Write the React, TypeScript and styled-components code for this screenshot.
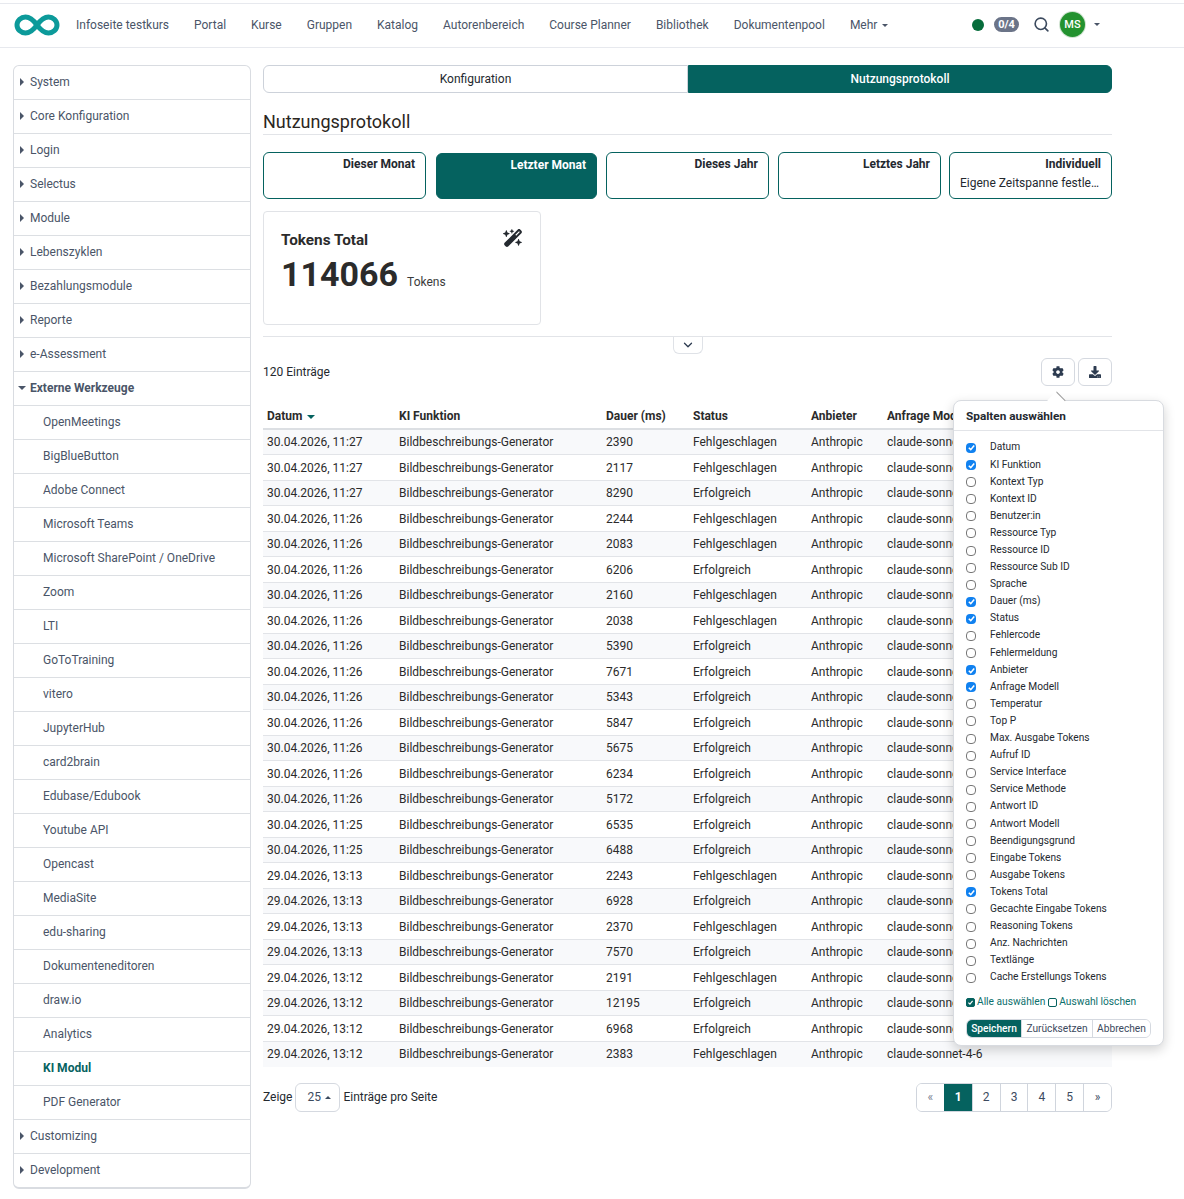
import React from "react";
import styled, { createGlobalStyle } from "styled-components";
import { Search, ChevronDown } from "lucide-react";
import { FaCog, FaDownload } from "react-icons/fa";
import { FaWandMagicSparkles } from "react-icons/fa6";

const TEAL = "#05625f";

const GlobalStyle = createGlobalStyle`
  * { box-sizing: border-box; }
  html, body { margin: 0; padding: 0; background: #fff; }
  body {
    font-family: Roboto, "Liberation Sans", sans-serif;
    font-size: 12px;
    color: #24292f;
  }
`;

const navLinks = ["Infoseite testkurs", "Portal", "Kurse", "Gruppen", "Katalog", "Autorenbereich", "Course Planner", "Bibliothek", "Dokumentenpool"];

type SideItem = { label: string; kind: "closed" | "open" | "sub" | "active" };

const subs = ["OpenMeetings", "BigBlueButton", "Adobe Connect", "Microsoft Teams", "Microsoft SharePoint / OneDrive", "Zoom", "LTI", "GoToTraining", "vitero", "JupyterHub", "card2brain", "Edubase/Edubook", "Youtube API", "Opencast", "MediaSite", "edu-sharing", "Dokumenteneditoren", "draw.io", "Analytics"];

const sideItems: SideItem[] = [
  ...["System", "Core Konfiguration", "Login", "Selectus", "Module", "Lebenszyklen", "Bezahlungsmodule", "Reporte", "e-Assessment"].map((label) => ({ label, kind: "closed" as const })),
  { label: "Externe Werkzeuge", kind: "open" },
  ...subs.map((label) => ({ label, kind: "sub" as const })),
  { label: "KI Modul", kind: "active" },
  { label: "PDF Generator", kind: "sub" },
  { label: "Customizing", kind: "closed" },
  { label: "Development", kind: "closed" },
];

const periods = [
  { title: "Dieser Monat", width: 163, gap: 0 },
  { title: "Letzter Monat", width: 161, gap: 10, active: true },
  { title: "Dieses Jahr", width: 163, gap: 9 },
  { title: "Letztes Jahr", width: 163, gap: 9 },
  { title: "Individuell", width: 163, gap: 8, sub: "Eigene Zeitspanne festle…" },
];

const F = "Fehlgeschlagen";
const E = "Erfolgreich";
const rows: [string, number, string][] = [
  ["30.04.2026, 11:27", 2390, F], ["30.04.2026, 11:27", 2117, F], ["30.04.2026, 11:27", 8290, E],
  ["30.04.2026, 11:26", 2244, F], ["30.04.2026, 11:26", 2083, F], ["30.04.2026, 11:26", 6206, E],
  ["30.04.2026, 11:26", 2160, F], ["30.04.2026, 11:26", 2038, F], ["30.04.2026, 11:26", 5390, E],
  ["30.04.2026, 11:26", 7671, E], ["30.04.2026, 11:26", 5343, E], ["30.04.2026, 11:26", 5847, E],
  ["30.04.2026, 11:26", 5675, E], ["30.04.2026, 11:26", 6234, E], ["30.04.2026, 11:26", 5172, E],
  ["30.04.2026, 11:25", 6535, E], ["30.04.2026, 11:25", 6488, E], ["29.04.2026, 13:13", 2243, F],
  ["29.04.2026, 13:13", 6928, E], ["29.04.2026, 13:13", 2370, F], ["29.04.2026, 13:13", 7570, E],
  ["29.04.2026, 13:12", 2191, F], ["29.04.2026, 13:12", 12195, E], ["29.04.2026, 13:12", 6968, E],
  ["29.04.2026, 13:12", 2383, F],
];

const columns: [string, boolean][] = [
  ["Datum", true], ["KI Funktion", true], ["Kontext Typ", false], ["Kontext ID", false], ["Benutzer:in", false],
  ["Ressource Typ", false], ["Ressource ID", false], ["Ressource Sub ID", false], ["Sprache", false], ["Dauer (ms)", true],
  ["Status", true], ["Fehlercode", false], ["Fehlermeldung", false], ["Anbieter", true], ["Anfrage Modell", true],
  ["Temperatur", false], ["Top P", false], ["Max. Ausgabe Tokens", false], ["Aufruf ID", false], ["Service Interface", false],
  ["Service Methode", false], ["Antwort ID", false], ["Antwort Modell", false], ["Beendigungsgrund", false], ["Eingabe Tokens", false],
  ["Ausgabe Tokens", false], ["Tokens Total", true], ["Gecachte Eingabe Tokens", false], ["Reasoning Tokens", false], ["Anz. Nachrichten", false],
  ["Textlänge", false], ["Cache Erstellungs Tokens", false],
];

const CheckMark = () => (
  <svg width="9" height="9" viewBox="0 0 10 10" fill="none" stroke="#fff" strokeWidth="1.7">
    <path d="M2 5.2 4.2 7.4 8 2.8" />
  </svg>
);

export default function App() {
  return (
    <>
      <GlobalStyle />
      <Page>
        <TopBar>
          <Logo width="46" height="22" viewBox="0 0 46 22" fill="none" stroke="#0c9a9a" strokeWidth="5">
            <path d="M23 11C19 5.500 15.500 3 11.500 3 7 3 3 6.500 3 11s4 8 8.500 8c4 0 7.500-2.500 11.500-8s7.500-8 11.500-8C39 3 43 6.500 43 11s-4 8-8.500 8c-4 0-7.500-2.500-11.500-8Z" />
          </Logo>
          <NavLinks>
            {navLinks.map((l) => (
              <NavLink key={l}>{l}</NavLink>
            ))}
            <NavLink>
              Mehr <Caret $color="#4a5568" />
            </NavLink>
          </NavLinks>
          <NavTools>
            <StatusDot />
            <Counter>0/4</Counter>
            <SearchButton>
              <Search size={17} strokeWidth={2.3} />
            </SearchButton>
            <Avatar>MS</Avatar>
            <Caret $color="#4a5568" />
          </NavTools>
        </TopBar>

        <Content>
          <Sidebar>
            {sideItems.map((item) => (
              <SideRow key={item.label} $kind={item.kind}>
                {item.kind === "closed" && <CaretRight />}
                {item.kind === "open" && <CaretOpen />}
                {item.label}
              </SideRow>
            ))}
          </Sidebar>

          <Main>
            <Tabs>
              <Tab>Konfiguration</Tab>
              <Tab $active>Nutzungsprotokoll</Tab>
            </Tabs>
            <Heading>Nutzungsprotokoll</Heading>

            <Periods>
              {periods.map((p) => (
                <Period key={p.title} $active={p.active} $width={p.width} $gap={p.gap}>
                  <PeriodTitle>{p.title}</PeriodTitle>
                  {p.sub && <PeriodSub>{p.sub}</PeriodSub>}
                </Period>
              ))}
            </Periods>

            <TokenCard>
              <TokenHead>
                <TokenTitle>Tokens Total</TokenTitle>
                <WandIcon size={20} color="#24292f" />
              </TokenHead>
              <TokenValue>
                <BigNumber>114066</BigNumber>
                <TokenUnit>Tokens</TokenUnit>
              </TokenValue>
            </TokenCard>

            <Collapse>
              <CollapseTab>
                <ChevronDown size={14} strokeWidth={2.2} color="#2d3b50" />
              </CollapseTab>
            </Collapse>

            <ToolRow>
              <span>120 Einträge</span>
              <ToolButtons>
                <ToolButton><FaCog size={12} /></ToolButton>
                <ToolButton><FaDownload size={12} /></ToolButton>
              </ToolButtons>
            </ToolRow>

            <DataTable>
              <colgroup>
                <col style={{ width: 132 }} />
                <col style={{ width: 207 }} />
                <col style={{ width: 87 }} />
                <col style={{ width: 118 }} />
                <col style={{ width: 76 }} />
                <col />
              </colgroup>
              <thead>
                <tr>
                  <Th>Datum <SortCaret /></Th>
                  <Th>KI Funktion</Th>
                  <Th>Dauer (ms)</Th>
                  <Th>Status</Th>
                  <Th>Anbieter</Th>
                  <Th>Anfrage Modell</Th>
                </tr>
              </thead>
              <tbody>
                {rows.map(([date, ms, status], i) => (
                  <Tr key={i}>
                    <Td>{date}</Td>
                    <Td>Bildbeschreibungs-Generator</Td>
                    <Td>{ms}</Td>
                    <Td>{status}</Td>
                    <Td>Anthropic</Td>
                    <Td>claude-sonnet-4-6</Td>
                  </Tr>
                ))}
              </tbody>
            </DataTable>

            <Footer>
              <PageSize>
                Zeige
                <SizeSelect>25 <CaretUp /></SizeSelect>
                Einträge pro Seite
              </PageSize>
              <Pager>
                <PageCell $muted>«</PageCell>
                <PageCell $active>1</PageCell>
                <PageCell>2</PageCell>
                <PageCell>3</PageCell>
                <PageCell>4</PageCell>
                <PageCell>5</PageCell>
                <PageCell>»</PageCell>
              </Pager>
            </Footer>

            <Popover>
              <PopArrow />
              <PopTitle>Spalten auswählen</PopTitle>
              <ColumnList>
                {columns.map(([label, on]) => (
                  <ColumnRow key={label}>
                    <RoundCheck $on={on}>{on && <CheckMark />}</RoundCheck>
                    {label}
                  </ColumnRow>
                ))}
              </ColumnList>
              <SelectLinks>
                <SelectLink><SmallBox $on><CheckMark /></SmallBox>Alle auswählen</SelectLink>
                <SelectLink><SmallBox />Auswahl löschen</SelectLink>
              </SelectLinks>
              <ButtonGroup>
                <GroupButton $primary $width={54}>Speichern</GroupButton>
                <GroupButton $width={71}>Zurücksetzen</GroupButton>
                <GroupButton $width={58}>Abbrechen</GroupButton>
              </ButtonGroup>
            </Popover>
          </Main>
        </Content>
      </Page>
    </>
  );
}

const Page = styled.div`
  width: 1184px;
  border-top: 1px solid transparent;
`;

const TopBar = styled.header`
  height: 45px;
  margin-top: 2px;
  padding: 0 0 2px 14px;
  border-top: 1px solid #e7e9ee;
  border-bottom: 1px solid #e7e9ee;
  display: flex;
  align-items: center;
`;

const Logo = styled.svg`
  flex: none;
  margin-right: 16px;
`;

const NavLinks = styled.nav`
  display: flex;
  gap: 25px;
  flex: 1;
`;

const NavLink = styled.span`
  color: #4a5568;
  white-space: nowrap;
`;

const Caret = styled.span<{ $color: string }>`
  display: inline-block;
  width: 0;
  height: 0;
  margin-left: 2px;
  vertical-align: middle;
  border-left: 3.500px solid transparent;
  border-right: 3.500px solid transparent;
  border-top: 3.500px solid ${(p) => p.$color};
`;

const NavTools = styled.div`
  display: flex;
  align-items: center;
  margin-right: 84px;
`;

const StatusDot = styled.span`
  width: 12px;
  height: 12px;
  border-radius: 50%;
  background: #066c3b;
  margin-right: 10px;
`;

const Counter = styled.span`
  width: 25px;
  height: 15px;
  border-radius: 8px;
  background: #6b7488;
  color: #fff;
  font-weight: 700;
  font-size: 11px;
  line-height: 15px;
  text-align: center;
  margin-right: 14px;
`;

const SearchButton = styled.span`
  display: flex;
  color: #3c4a5e;
  margin-right: 10px;
`;

const Avatar = styled.span`
  width: 25px;
  height: 25px;
  border-radius: 50%;
  background: #23922f;
  box-shadow: 0 0 0 1px #cfe3d0;
  color: #fff;
  font-weight: 500;
  font-size: 11px;
  line-height: 25px;
  text-align: center;
  margin-right: 7px;
`;

const Content = styled.div`
  display: flex;
  align-items: flex-start;
  gap: 12px;
  padding: 17px 0 0 13px;
`;

const Sidebar = styled.aside`
  width: 238px;
  flex: none;
  border: 1px solid #d9dce1;
  border-bottom-width: 2px;
  border-radius: 6px;
  overflow: hidden;
`;

const SideRow = styled.div<{ $kind: string }>`
  height: 34px;
  display: flex;
  align-items: center;
  border-bottom: 1px solid #dcdfe3;
  padding-bottom: 2px;
  padding-left: ${(p) => (p.$kind === "sub" || p.$kind === "active" ? "29px" : p.$kind === "open" ? "4px" : "6px")};
  color: ${(p) => (p.$kind === "active" ? TEAL : "#4a5568")};
  font-weight: ${(p) => (p.$kind === "active" || p.$kind === "open" ? 700 : 400)};
  &:last-child { border-bottom: 0; height: 33px; }
`;

const CaretRight = styled.span`
  width: 0;
  height: 0;
  margin-right: 6px;
  border-top: 4.500px solid transparent;
  border-bottom: 4.500px solid transparent;
  border-left: 4.500px solid #4a5568;
`;

const CaretOpen = styled.span`
  width: 0;
  height: 0;
  margin-right: 4px;
  border-left: 4.500px solid transparent;
  border-right: 4.500px solid transparent;
  border-top: 4.500px solid #4a5568;
`;

const Main = styled.main`
  position: relative;
  width: 849px;
  flex: none;
`;

const Tabs = styled.div`
  display: grid;
  grid-template-columns: 425px 424px;
  height: 28px;
`;

const Tab = styled.div<{ $active?: boolean }>`
  display: flex;
  align-items: center;
  justify-content: center;
  color: ${(p) => (p.$active ? "#fff" : "#24292f")};
  background: ${(p) => (p.$active ? TEAL : "#fff")};
  font-weight: ${(p) => (p.$active ? 500 : 400)};
  border: 1px solid ${(p) => (p.$active ? TEAL : "#cdd2da")};
  border-radius: ${(p) => (p.$active ? "0 6px 6px 0" : "6px 0 0 6px")};
`;

const Heading = styled.h2`
  margin: 17px 0 17px;
  height: 25px;
  font-size: 18px;
  font-weight: 400;
  line-height: 24px;
  color: #2b2622;
  border-bottom: 1px solid #e2e4e8;
`;

const Periods = styled.div`
  display: flex;
`;

const Period = styled.div<{ $active?: boolean; $width: number; $gap: number }>`
  width: ${(p) => p.$width}px;
  height: ${(p) => (p.$active ? "46px" : "47px")};
  margin: ${(p) => (p.$active ? "1px" : "0")} 0 0 ${(p) => p.$gap}px;
  padding: 4px 10px;
  border: 1px solid ${TEAL};
  border-radius: 6px;
  text-align: right;
  background: ${(p) => (p.$active ? TEAL : "#fff")};
  color: ${(p) => (p.$active ? "#fff" : "#24292f")};
`;

const PeriodTitle = styled.div`
  font-weight: 700;
  line-height: 14px;
`;

const PeriodSub = styled.div`
  margin-top: 5px;
  line-height: 14px;
  text-align: left;
  white-space: nowrap;
`;

const TokenCard = styled.section`
  width: 278px;
  height: 114px;
  margin-top: 12px;
  padding: 19px 17px;
  border: 1px solid #e1e3e7;
  border-radius: 4px;
`;

const TokenHead = styled.div`
  display: flex;
  justify-content: space-between;
  align-items: flex-start;
`;

const WandIcon = styled(FaWandMagicSparkles)`
  margin-top: -3px;
`;

const TokenTitle = styled.div`
  font-size: 15.300px;
  font-weight: 700;
  line-height: 19px;
  color: #2b2b2b;
`;

const TokenValue = styled.div`
  display: flex;
  align-items: baseline;
  gap: 9px;
  margin-top: 4px;
`;

const BigNumber = styled.span`
  font-size: 34px;
  line-height: 40px;
  font-weight: 700;
  color: #2b2b2b;
`;

const TokenUnit = styled.span`
  color: #3b3b3b;
`;

const Collapse = styled.div`
  margin-top: 11px;
  border-top: 1px solid #e2e4e8;
  height: 22px;
  display: flex;
  justify-content: center;
  padding-left: 1px;
`;

const CollapseTab = styled.div`
  width: 30px;
  height: 17px;
  display: flex;
  align-items: center;
  justify-content: center;
  border: 1px solid #dfe2e7;
  border-top: 0;
  border-radius: 0 0 6px 6px;
`;

const ToolRow = styled.div`
  height: 28px;
  display: flex;
  align-items: center;
  justify-content: space-between;
`;

const ToolButtons = styled.div`
  display: flex;
  gap: 3px;
`;

const ToolButton = styled.button`
  width: 34px;
  height: 28px;
  display: flex;
  align-items: center;
  justify-content: center;
  padding: 0;
  background: #fff;
  color: #2d3b50;
  border: 1px solid #d5d9e0;
  border-radius: 6px;
`;

const DataTable = styled.table`
  width: 100%;
  margin-top: 15.400px;
  table-layout: fixed;
  border-collapse: collapse;
`;

const Th = styled.th`
  height: 28px;
  padding: 2px 4px 0;
  text-align: left;
  font-weight: 700;
  white-space: nowrap;
  color: #2b2b2b;
  border-bottom: 2px solid #dcdfe3;
`;

const SortCaret = styled.span`
  display: inline-block;
  width: 0;
  height: 0;
  margin-left: 2px;
  vertical-align: middle;
  border-left: 4px solid transparent;
  border-right: 4px solid transparent;
  border-top: 4px solid ${TEAL};
`;

const Tr = styled.tr`
  height: 25.500px;
  border-bottom: 1px solid #e2e4e8;
  &:nth-child(odd) { background: #f8f9fb; }
  &:last-child { border-bottom: 0; }
`;

const Td = styled.td`
  padding: 0 4px;
  white-space: nowrap;
  overflow: hidden;
  color: #2b2b2b;
`;

const Footer = styled.div`
  display: flex;
  justify-content: space-between;
  margin-top: 16px;
`;

const PageSize = styled.div`
  display: flex;
  align-items: center;
  gap: 3px;
  height: 29px;
`;

const SizeSelect = styled.span`
  width: 45px;
  height: 29px;
  display: flex;
  align-items: center;
  gap: 4px;
  padding-left: 11px;
  color: #3c4a5e;
  border: 1px solid #d5d9e0;
  border-radius: 6px;
`;

const CaretUp = styled.span`
  width: 0;
  height: 0;
  border-left: 3px solid transparent;
  border-right: 3px solid transparent;
  border-bottom: 3px solid #3c4a5e;
`;

const Pager = styled.div`
  display: flex;
  width: 196px;
  height: 29px;
  border: 1px solid #d0d5dd;
  border-radius: 6px;
  overflow: hidden;
`;

const PageCell = styled.span<{ $active?: boolean; $muted?: boolean }>`
  flex: 1;
  display: flex;
  align-items: center;
  justify-content: center;
  background: ${(p) => (p.$active ? TEAL : "#fff")};
  color: ${(p) => (p.$active ? "#fff" : p.$muted ? "#7b8494" : "#3c4a5e")};
  font-weight: ${(p) => (p.$active ? 700 : 400)};
  border-left: 1px solid ${(p) => (p.$active ? TEAL : "#d0d5dd")};
  &:first-child { border-left: 0; }
`;

const Popover = styled.div`
  position: absolute;
  left: 690px;
  top: 335px;
  width: 211px;
  height: 646px;
  background: #fff;
  border: 1px solid #d8dbe0;
  border-radius: 8px;
  box-shadow: 0 4px 12px rgba(0, 0, 0, 0.18);
`;

const PopArrow = styled.span`
  position: absolute;
  left: 96px;
  top: -7px;
  width: 13px;
  height: 13px;
  background: #fff;
  border-top: 1px solid #9a9a9a;
  border-left: 1px solid transparent;
  transform: rotate(45deg);
`;

const PopTitle = styled.div`
  height: 30px;
  padding: 8px 12px 0;
  font-size: 11.800px;
  font-weight: 700;
  line-height: 14px;
  color: #24292f;
  border-bottom: 1px solid #e2e4e8;
`;

const ColumnList = styled.div`
  padding-top: 7.400px;
`;

const ColumnRow = styled.div`
  height: 17.100px;
  display: flex;
  align-items: center;
  padding-left: 12px;
  font-size: 10.200px;
  color: #24292f;
`;

const RoundCheck = styled.span<{ $on?: boolean }>`
  width: 10px;
  height: 10px;
  margin: 2px 14px 0 0;
  display: flex;
  align-items: center;
  justify-content: center;
  border-radius: 4px;
  background: ${(p) => (p.$on ? "#1081f0" : "#fff")};
  border: ${(p) => (p.$on ? "0" : "1px solid #777")};
`;

const SelectLinks = styled.div`
  display: flex;
  gap: 3px;
  padding: 11.100px 0 0 12px;
`;

const SelectLink = styled.span`
  display: flex;
  align-items: center;
  gap: 2px;
  color: #0d6f6c;
  font-size: 10.200px;
  line-height: 12px;
`;

const SmallBox = styled.span<{ $on?: boolean }>`
  width: 9px;
  height: 9px;
  display: flex;
  align-items: center;
  justify-content: center;
  border-radius: 2px;
  border: 1px solid ${TEAL};
  background: ${(p) => (p.$on ? TEAL : "#fff")};
`;

const ButtonGroup = styled.div`
  display: flex;
  height: 19px;
  margin: 11px 0 0 12px;
  width: 185px;
  border: 1px solid #d5d9e0;
  border-radius: 6px;
  overflow: hidden;
`;

const GroupButton = styled.span<{ $primary?: boolean; $width: number }>`
  width: ${(p) => p.$width}px;
  flex: none;
  display: flex;
  align-items: center;
  justify-content: center;
  font-size: 10.200px;
  font-weight: ${(p) => (p.$primary ? 500 : 400)};
  background: ${(p) => (p.$primary ? TEAL : "#fff")};
  color: ${(p) => (p.$primary ? "#fff" : "#3c4a5e")};
  border-left: 1px solid #d5d9e0;
  &:first-child { border-left: 0; }
`;
